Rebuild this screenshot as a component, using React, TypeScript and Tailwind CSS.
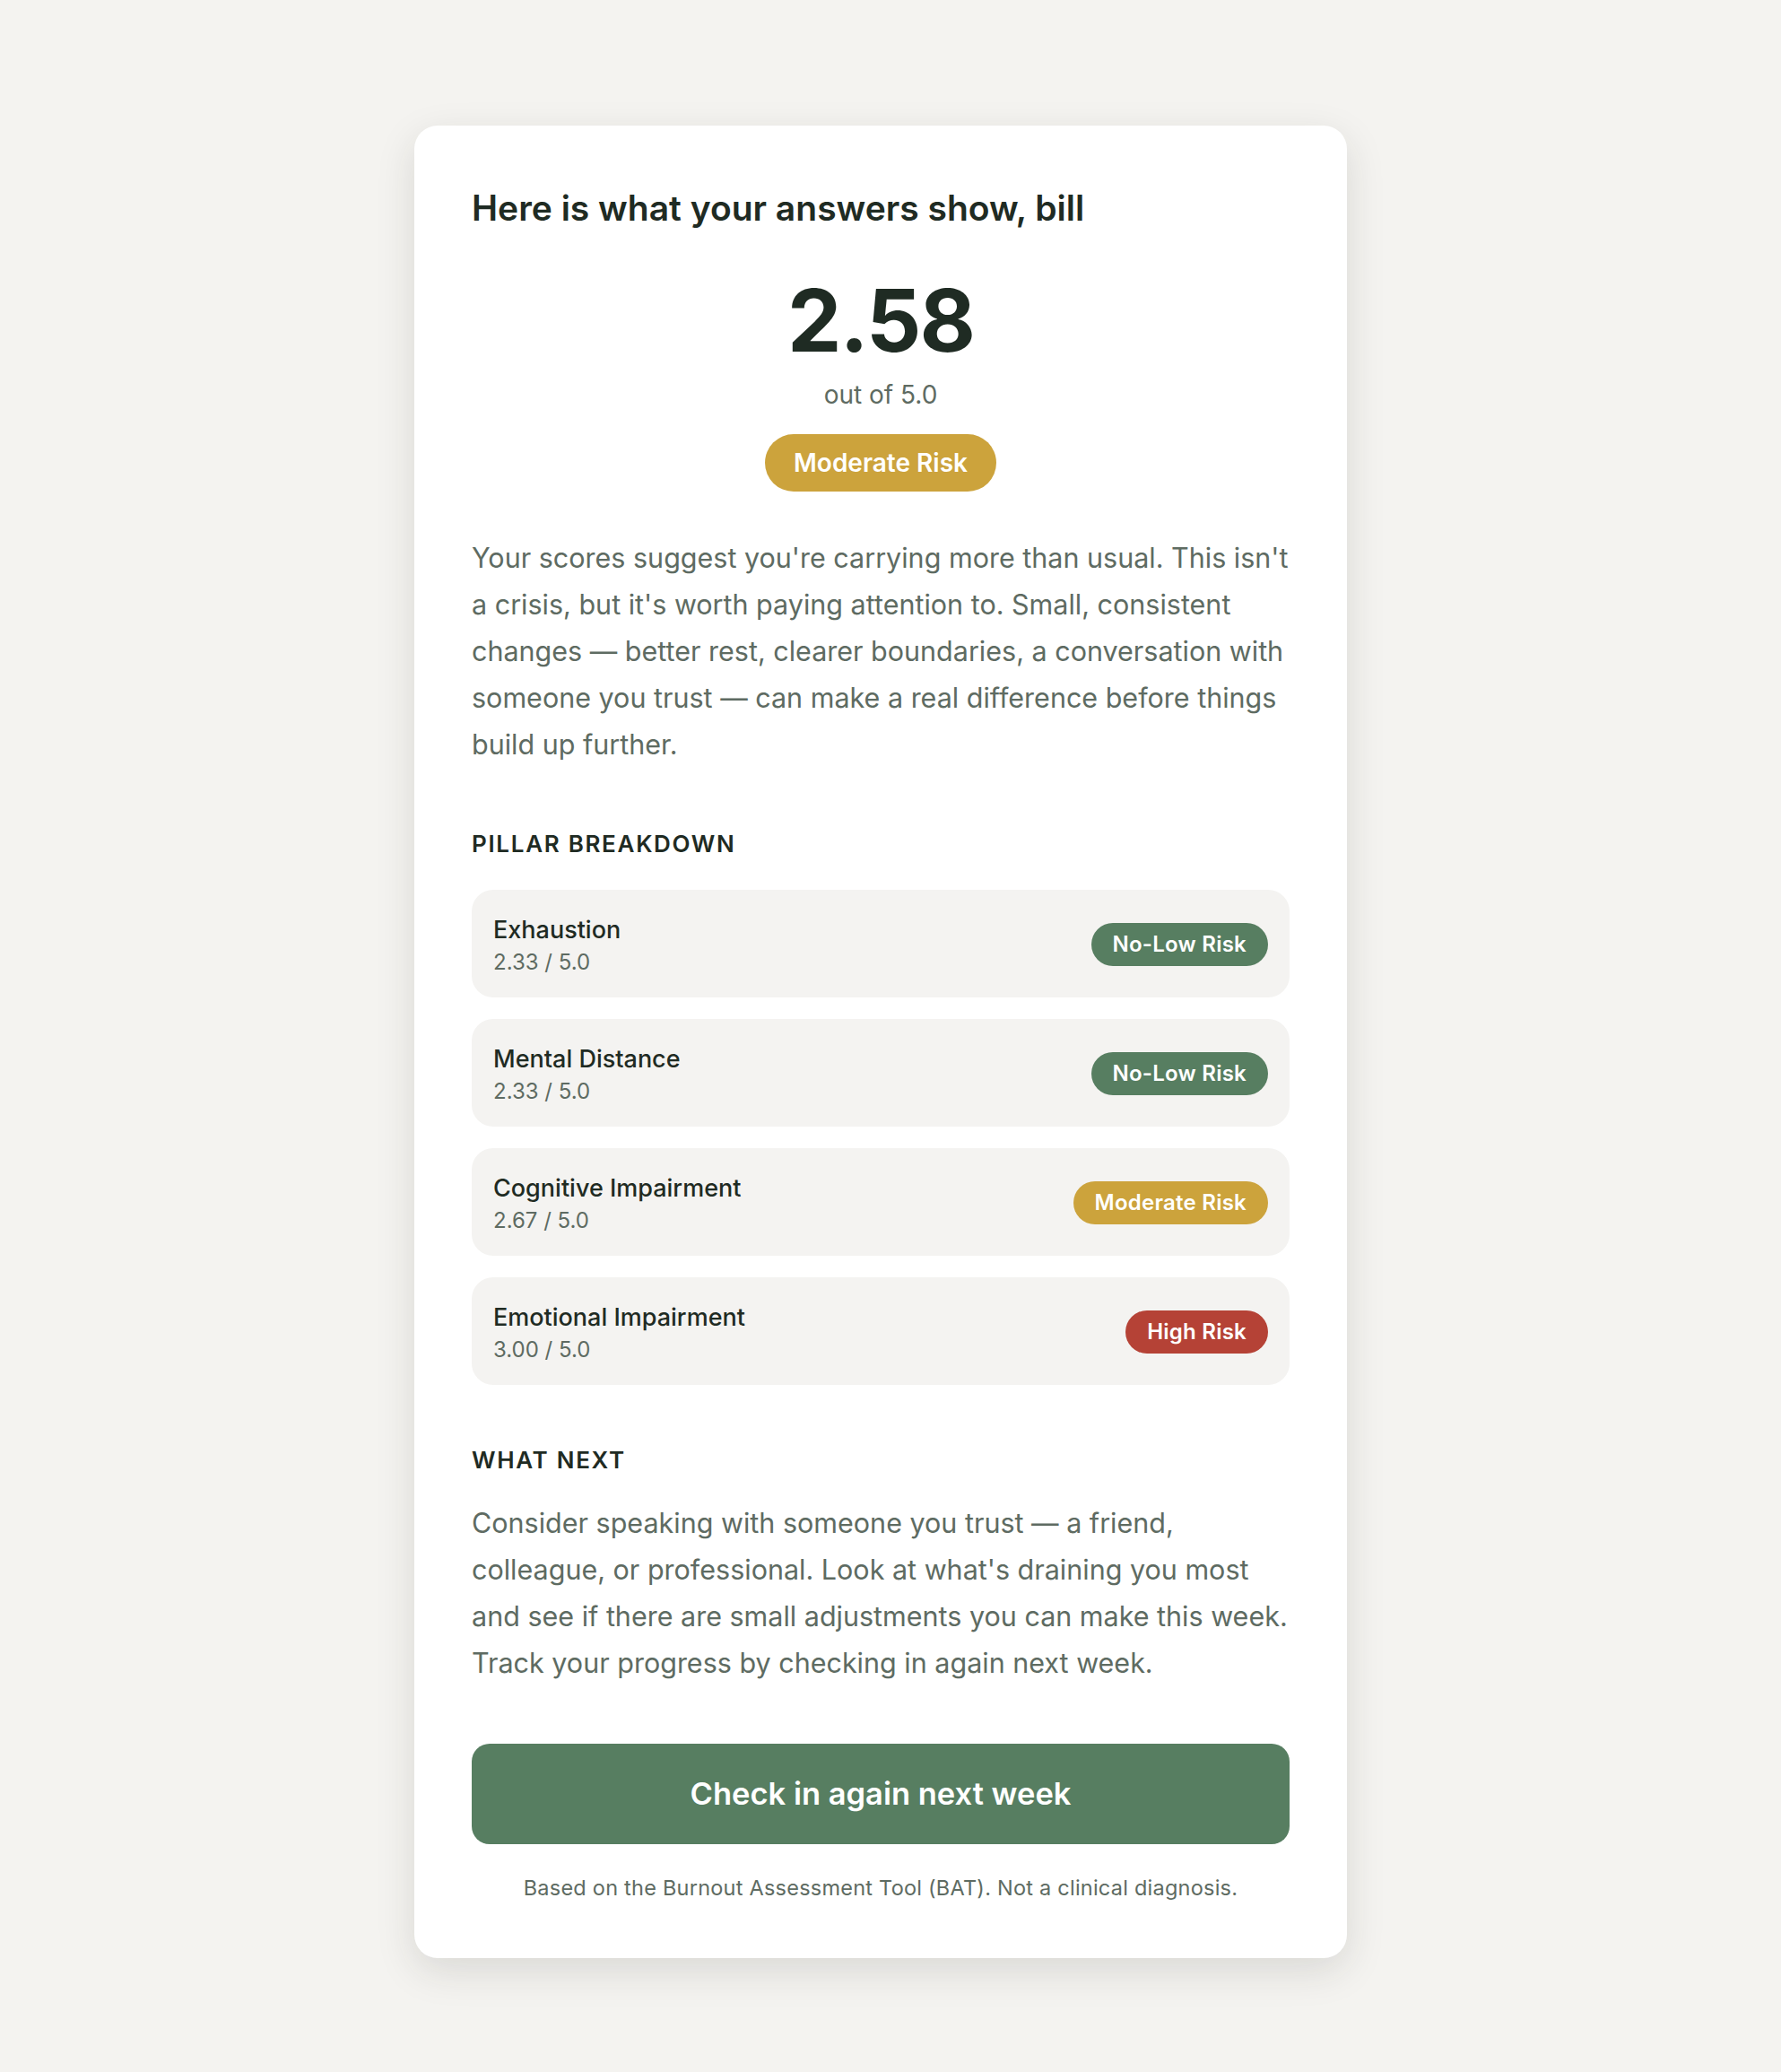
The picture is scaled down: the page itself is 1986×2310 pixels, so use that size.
import React from "react";

type Pillar = {
  name: string;
  score: string;
  risk: "low" | "moderate" | "high";
};

const pillars: Pillar[] = [
  { name: "Exhaustion", score: "2.33 / 5.0", risk: "low" },
  { name: "Mental Distance", score: "2.33 / 5.0", risk: "low" },
  { name: "Cognitive Impairment", score: "2.67 / 5.0", risk: "moderate" },
  { name: "Emotional Impairment", score: "3.00 / 5.0", risk: "high" },
];

const riskStyles = {
  low: { label: "No-Low Risk", className: "bg-[#577e61]" },
  moderate: { label: "Moderate Risk", className: "bg-[#cca33c]" },
  high: { label: "High Risk", className: "bg-[#b54236]" },
};

const PillarRow = ({ pillar }: { pillar: Pillar }) => {
  const risk = riskStyles[pillar.risk];
  return (
    <div className="flex items-center justify-between rounded-[24px] bg-[#f4f3f1] px-[24px] pt-[27px] pb-[23px]">
      <div className="flex flex-col">
        <span className="text-[27px] font-medium leading-[36px] text-[#1f2b23]">
          {pillar.name}
        </span>
        <span className="mt-[2px] text-[24px] leading-[32px] text-[#5e6b62]">
          {pillar.score}
        </span>
      </div>
      <span
        className={`-mt-[3px] rounded-full px-[24px] py-[8px] text-[24px] font-semibold leading-[32px] tracking-[0.01em] text-white ${risk.className}`}
      >
        {risk.label}
      </span>
    </div>
  );
};

export default function App() {
  return (
    <div className="min-h-screen bg-[#f4f3f0] pt-[140px] pb-[140px] pr-[22px] font-['Inter','Noto_Sans',sans-serif] antialiased">
      <div className="mx-auto w-[1040px] rounded-[26px] bg-white px-[64px] pt-[64px] pb-[62px] shadow-[0_14px_44px_rgba(40,40,30,0.13)]">
        {/* Header */}
        <h1 className="text-[39px] font-semibold leading-[56px] text-[#1f2b23]">
          Here is what your answers show, bill
        </h1>

        {/* Score */}
        <div className="mt-[49px] flex flex-col items-center">
          <div className="text-[96px] font-bold leading-none tracking-[-0.02em] text-[#1f2b23]">
            2.58
          </div>
          <div className="mt-[15px] text-[28px] leading-[40px] text-[#5e6b62]">
            out of 5.0
          </div>
          <span className="mt-[24px] rounded-full bg-[#cca33c] px-[32px] py-[11px] text-[28px] font-semibold leading-[42px] text-white">
            Moderate Risk
          </span>
        </div>

        <p className="mt-[48px] text-[30.5px] leading-[52px] text-[#5e6b62]">
          Your scores suggest you're carrying more than usual. This isn't a
          crisis, but it's worth paying attention to. Small, consistent changes
          — better rest, clearer boundaries, a conversation with someone you
          trust — can make a real difference before things build up further.
        </p>

        {/* Pillars */}
        <h2 className="mt-[67px] text-[26px] font-semibold leading-[36px] tracking-[0.065em] text-[#1f2b23]">
          PILLAR BREAKDOWN
        </h2>
        <div className="mt-[33px] flex flex-col gap-[24px]">
          {pillars.map((p) => (
            <PillarRow key={p.name} pillar={p} />
          ))}
        </div>

        {/* Next steps */}
        <h2 className="mt-[66px] text-[26px] font-semibold leading-[36px] tracking-[0.065em] text-[#1f2b23]">
          WHAT NEXT
        </h2>
        <p className="mt-[26px] text-[30.5px] leading-[52px] text-[#5e6b62]">
          Consider speaking with someone you trust — a friend, colleague, or
          professional. Look at what's draining you most and see if there are
          small adjustments you can make this week. Track your progress by
          checking in again next week.
        </p>

        <button className="mt-[64px] flex h-[112px] w-full items-center justify-center rounded-[20px] bg-[#577e61] text-[34.5px] font-semibold text-white">
          Check in again next week
        </button>

        <p className="mt-[33px] text-center text-[23.5px] leading-[32px] tracking-[0.01em] text-[#5e6b62]">
          Based on the Burnout Assessment Tool (BAT). Not a clinical diagnosis.
        </p>
      </div>
    </div>
  );
}
